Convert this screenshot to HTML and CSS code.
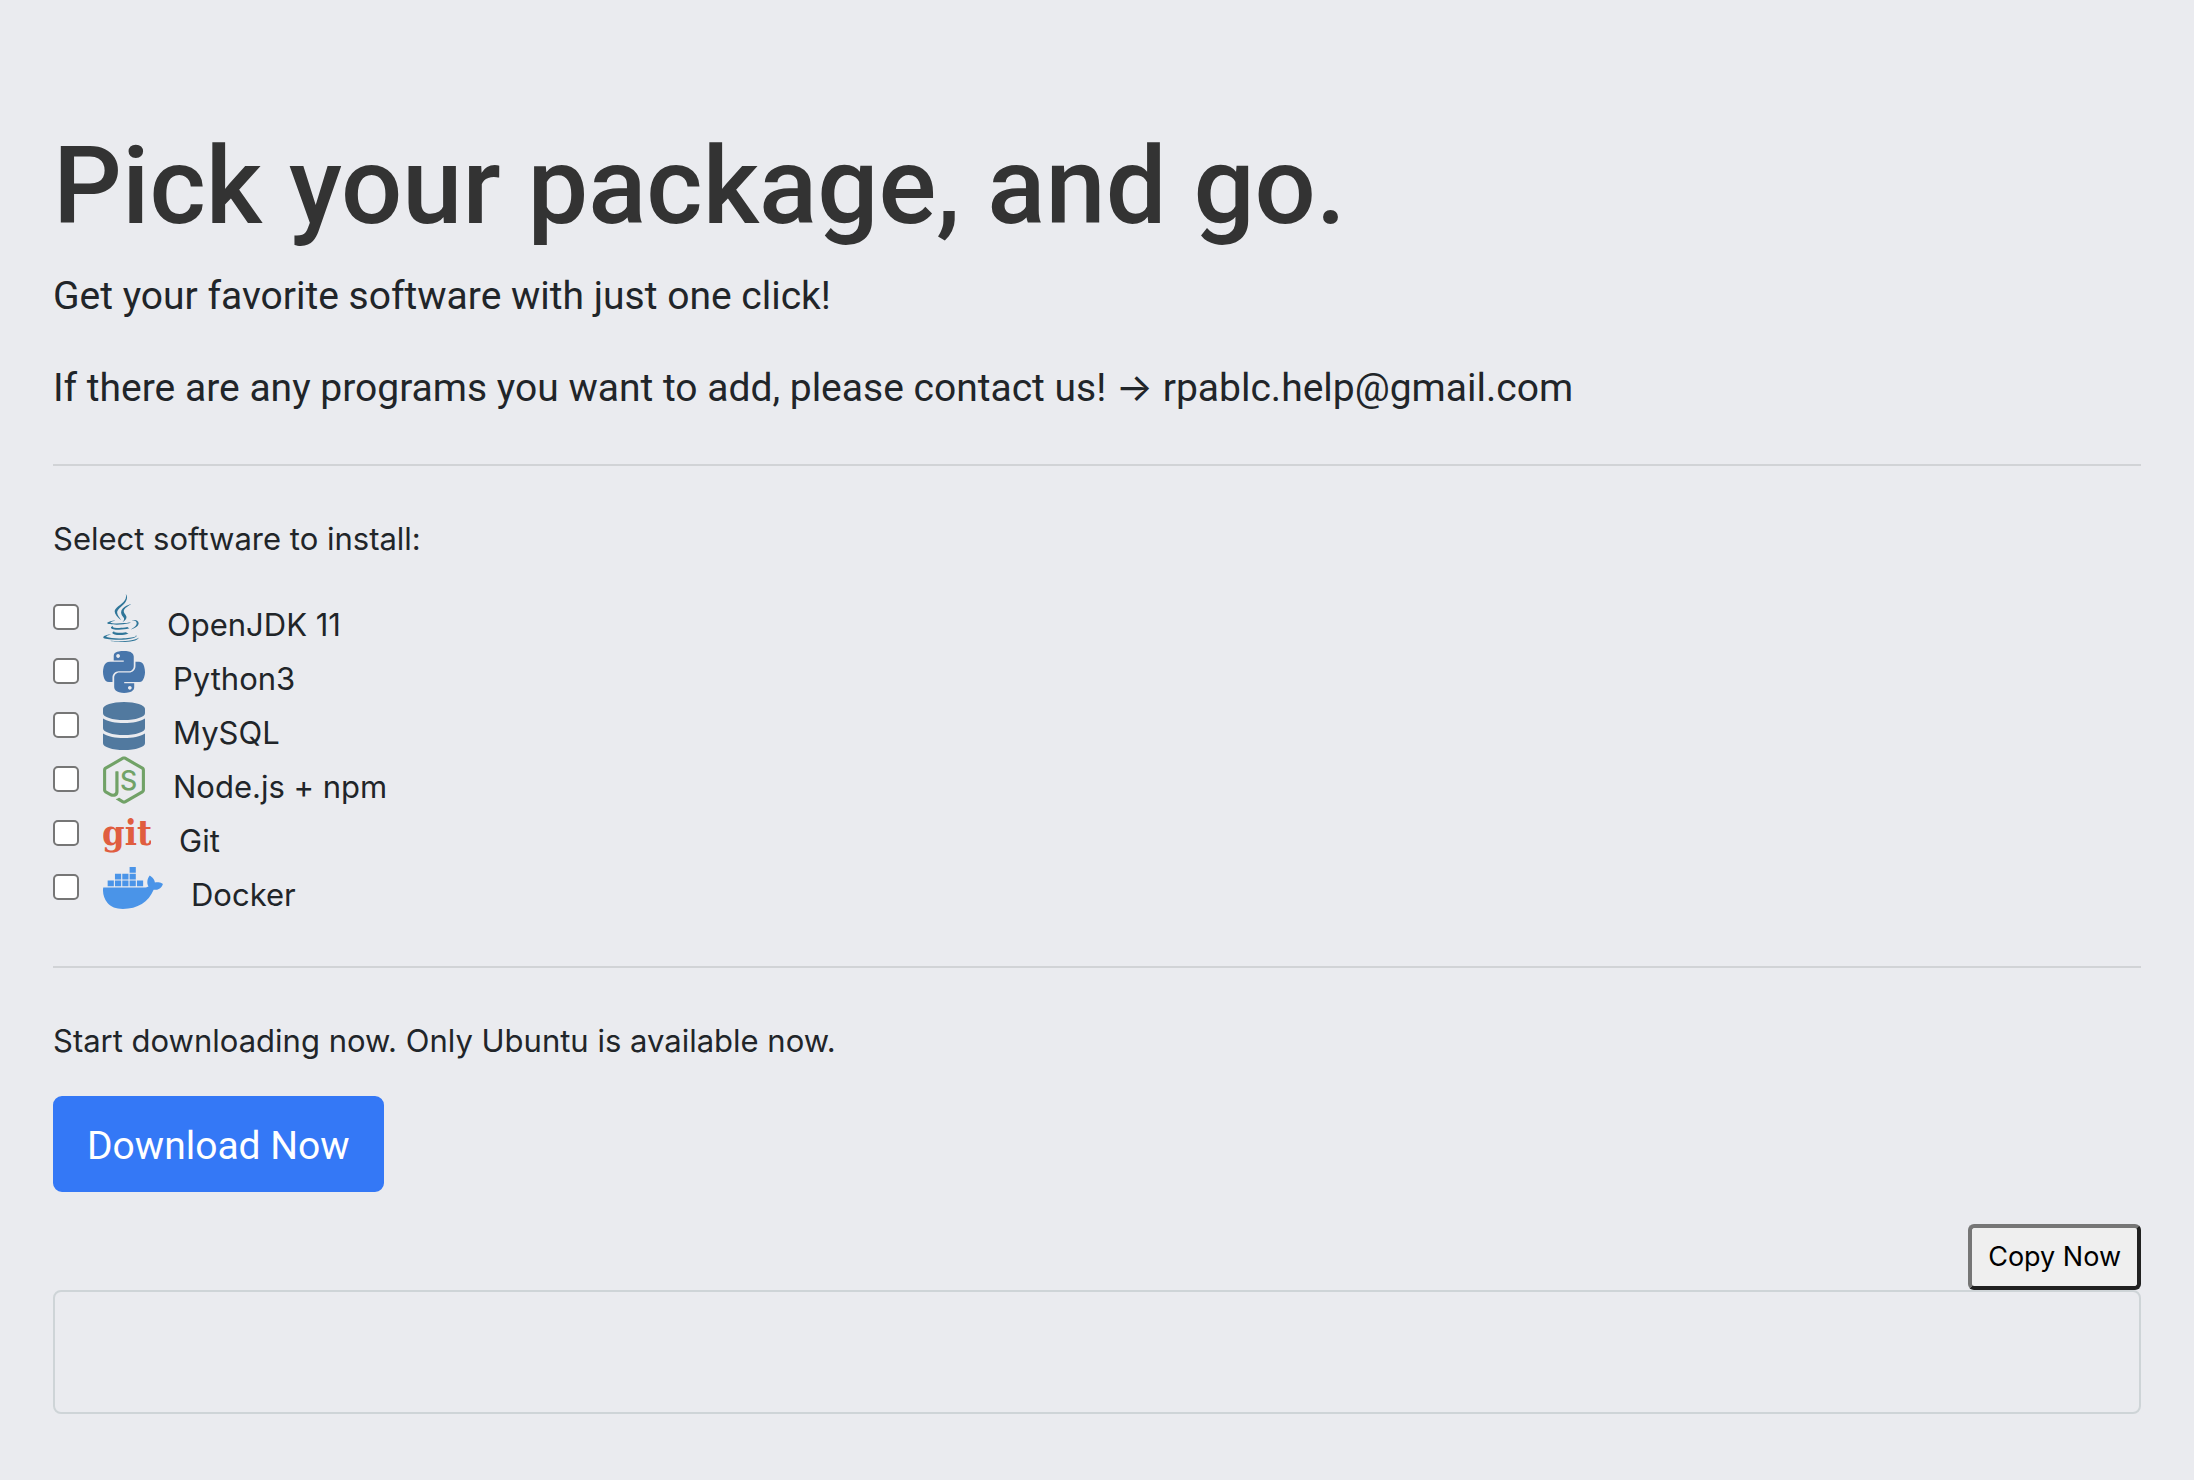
FILE: index.html
```html
<!DOCTYPE html>
<html lang="en">
<head>
    <meta charset="UTF-8">
    <meta name="viewport" content="width=device-width, initial-scale=1.0">
    <title>Pick your package</title>
    <link rel="stylesheet" href="styles.css">
</head>
<body>
    <main class="container">
        <h1 class="title">Pick your package, and go.</h1>
        <p class="lead">Get your favorite software with just one click!</p>
        <p class="lead">If there are any programs you want to add, please contact us! → rpablc.help@gmail.com</p>
        <hr class="divider">
        <form class="package-form">
            <p class="text">Select software to install:</p>
            <div class="package-list">
                <div class="package">
                    <input type="checkbox" id="openjdk" name="package" value="openjdk">
                    <label for="openjdk">
                        <svg class="icon java" viewBox="0 0 384 512" width="36" height="48" aria-hidden="true"><path d="M277.74 312.9c9.8-6.7 23.4-12.5 23.4-12.5s-38.7 7-77.2 10.2c-47.1 3.9-97.7 4.7-123.1 1.3-60.1-8 33-30.1 33-30.1s-36.1-2.4-80.6 19c-52.5 25.4 130 37 224.5 12.1zm-85.4-32.1c-19-42.7-83.1-80.2 0-145.8C296 53.2 242.84 0 242.84 0c21.5 84.5-75.6 110.1-110.7 162.6-23.9 35.9 11.7 74.4 60.2 118.2zm114.6-176.2c.1 0-175.2 43.8-91.5 140.2 24.7 28.4-6.5 54-6.5 54s62.7-32.4 33.9-72.9c-26.9-37.8-47.5-56.6 64.1-121.3zm-6.1 270.5a12.19 12.19 0 0 1-2 2.6c128.3-33.7 81.1-118.9 19.8-97.3a17.33 17.33 0 0 0-8.2 6.3 70.45 70.45 0 0 1 11-3c31-6.5 75.5 41.5-20.6 91.4zM348 437.4s14.5 11.9-15.9 21.2c-57.9 17.5-240.8 22.8-291.6.7-18.3-7.9 16-19 26.8-21.3 11.2-2.4 17.7-2 17.7-2-20.3-14.3-131.3 28.1-56.4 40.2C232.84 509.4 401 461.3 348 437.4zM124.44 396c-78.7 22 47.9 67.4 148.1 24.5a185.89 185.89 0 0 1-28.2-13.8c-44.7 8.5-65.4 9.1-106 4.5-33.5-3.8-13.9-15.2-13.9-15.2zm179.8 97.2c-78.7 14.8-175.8 13.1-233.3 3.6 0-.1 11.8 9.7 72.4 13.6 92.2 5.9 233.8-3.3 237.1-46.9 0 0-6.4 16.5-76.2 29.7zM260.64 353c-59.2 11.4-93.5 11.1-136.8 6.6-33.5-3.5-11.6-19.7-11.6-19.7-86.8 28.8 48.2 61.4 169.5 25.9a60.37 60.37 0 0 1-21.1-12.8z"/></svg>
                        <span>OpenJDK 11</span>
                    </label>
                </div>
                <div class="package">
                    <input type="checkbox" id="python" name="package" value="python">
                    <label for="python">
                        <svg class="icon python" viewBox="0 0 448 512" width="42" height="48" aria-hidden="true"><path d="M439.8 200.5c-7.7-30.9-22.3-54.2-53.4-54.2h-40.1v47.4c0 36.8-31.2 67.8-66.8 67.8H172.7c-29.2 0-53.4 25-53.4 54.3v101.8c0 29 25.2 46 53.4 54.3 33.8 9.9 66.3 11.7 106.8 0 26.9-7.8 53.4-23.5 53.4-54.3v-40.7H226.2v-13.6h160.2c31.1 0 42.6-21.7 53.4-54.2 11.2-33.5 10.7-65.7 0-108.6zM286.2 404c11.1 0 20.1 9.1 20.1 20.3 0 11.3-9 20.4-20.1 20.4-11 0-20.1-9.2-20.1-20.4.1-11.3 9.1-20.3 20.1-20.3zM167.8 248.1h106.8c29.7 0 53.4-24.5 53.4-54.3V91.9c0-29-24.4-50.7-53.4-55.6-35.8-5.9-74.7-5.6-106.8.1-45.2 8-53.4 24.7-53.4 55.6v40.7h106.9v13.6h-147c-31.1 0-58.3 18.7-66.8 54.2-9.8 40.7-10.2 66.1 0 108.6 7.6 31.6 25.7 54.2 56.8 54.2H101v-48.8c0-35.3 30.5-66.4 66.8-66.4zm-6.7-142.6c-11.1 0-20.1-9.1-20.1-20.3.1-11.3 9-20.4 20.1-20.4 11 0 20.1 9.2 20.1 20.4s-9 20.3-20.1 20.3z"/></svg>
                        <span>Python3</span>
                    </label>
                </div>
                <div class="package">
                    <input type="checkbox" id="mysql" name="package" value="mysql">
                    <label for="mysql">
                        <svg class="icon mysql" viewBox="0 0 448 512" width="42" height="48" aria-hidden="true"><path d="M448 73.143v45.714C448 159.143 347.667 192 224 192S0 159.143 0 118.857V73.143C0 32.857 100.333 0 224 0s224 32.857 224 73.143zM448 176v102.857C448 319.143 347.667 352 224 352S0 319.143 0 278.857V176c48.125 33.143 136.208 48.572 224 48.572S399.874 209.143 448 176zm0 160v102.857C448 479.143 347.667 512 224 512S0 479.143 0 438.857V336c48.125 33.143 136.208 48.572 224 48.572S399.874 369.143 448 336z"/></svg>
                        <span>MySQL</span>
                    </label>
                </div>
                <div class="package">
                    <input type="checkbox" id="node" name="package" value="node">
                    <label for="node">
                        <svg class="icon node" viewBox="0 0 448 512" width="42" height="48" aria-hidden="true"><path d="M224 508c-6.7 0-13.5-1.8-19.4-5.2l-61.7-36.5c-9.2-5.2-4.7-7-1.7-8 12.3-4.3 14.8-5.2 27.9-12.7 1.4-.8 3.2-.5 4.6.4l47.4 28.1c1.7 1 4.1 1 5.7 0l184.7-106.6c1.7-1 2.8-3 2.8-5V149.3c0-2.1-1.1-4-2.9-5.1L226.8 37.7c-1.7-1-4-1-5.7 0L36.6 144.3c-1.8 1-2.9 3-2.9 5.1v213.1c0 2 1.1 4 2.9 4.9l50.6 29.2c27.5 13.7 44.3-2.4 44.3-18.7V167.5c0-3 2.4-5.3 5.4-5.3h23.4c2.9 0 5.4 2.3 5.4 5.3V378c0 36.6-20 57.6-54.7 57.6-10.7 0-19.1 0-42.5-11.6l-48.4-27.9C8.1 389.2.7 376.3.7 362.4V149.3c0-13.8 7.4-26.8 19.4-33.7L204.6 9c11.7-6.6 27.2-6.6 38.8 0l184.7 106.7c12 6.9 19.4 19.8 19.4 33.7v213.1c0 13.8-7.4 26.7-19.4 33.7L243.4 502.8c-5.9 3.4-12.6 5.2-19.4 5.2z"/><text class="node-text" x="182" y="360">S</text></svg>
                        <span>Node.js + npm</span>
                    </label>
                </div>
                <div class="package">
                    <input type="checkbox" id="git" name="package" value="git">
                    <label for="git">
                        <svg class="icon git" viewBox="0 0 48 48" width="48" height="48" aria-hidden="true"><text class="git-text" x="-1" y="35">git</text></svg>
                        <span>Git</span>
                    </label>
                </div>
                <div class="package">
                    <input type="checkbox" id="docker" name="package" value="docker">
                    <label for="docker">
                        <svg class="icon docker" viewBox="0 0 640 512" width="60" height="48" aria-hidden="true"><path d="M349.9 236.3h-66.1v-59.4h66.1v59.4zm0-204.3h-66.1v60.7h66.1V32zm78.2 144.8H362v59.4h66.1v-59.4zm-156.3-72.1h-66.1v60.1h66.1v-60.1zm78.1 0h-66.1v60.1h66.1v-60.1zm276.8 100c-14.4-9.7-47.6-13.2-73.1-8.4-3.3-24-16.7-44.9-41.1-63.7l-14-9.3-9.3 14c-18.4 27.8-23.4 73.6-3.7 103.8-8.7 4.7-25.8 11.1-48.4 10.7H2.4c-8.7 50.8 5.8 116.8 44 162.1 37.1 43.9 92.7 66.2 165.4 66.2 157.4 0 273.9-72.5 328.4-204.2 21.4.4 67.6.1 91.3-45.2 1.5-2.5 6.6-13.2 8.5-17.1l-13.3-8.9zm-511.1-27.9h-66v59.4h66.1v-59.4zm78.1 0h-66.1v59.4h66.1v-59.4zm78.1 0h-66.1v59.4h66.1v-59.4zm-78.1-72.1h-66.1v60.1h66.1v-60.1z"/></svg>
                        <span>Docker</span>
                    </label>
                </div>
            </div>
            <hr class="divider">
            <p class="text">Start downloading now. Only Ubuntu is available now.</p>
            <button type="button" class="download-btn">Download Now</button>
        </form>
        <div class="copy-row">
            <button type="button" class="copy-btn">Copy Now</button>
        </div>
        <div class="output"></div>
    </main>
</body>
</html>
```

FILE: styles.css
```css
* {
    box-sizing: border-box;
}
body {
    font-family: Inter, "Liberation Sans", sans-serif;
    font-size: 31px;
    line-height: 50px;
    color: #212529;
    background-color: #eaebef;
    margin: 0;
}
.container {
    padding: 122px 53px 64px;
}
.title {
    margin: 0 0 16px;
    font-family: Roboto, Inter, sans-serif;
    font-size: 108px;
    font-weight: 500;
    line-height: 128px;
    color: #333;
}
.lead {
    margin: 0 0 32px;
    font-family: Roboto, Inter, sans-serif;
    font-size: 39px;
    font-weight: 400;
    line-height: 60px;
}
.divider {
    margin: 46px 0 48px;
    border: 0;
    border-top: 2px solid #d1d3d6;
}
.text {
    margin: 0 0 30px;
}
.package-list {
    margin-bottom: 48px;
}
.package {
    display: flex;
    height: 54px;
}
.package input {
    appearance: none;
    width: 26px;
    height: 26px;
    margin: 10px 24px 0 0;
    border: 2px solid #767676;
    border-radius: 5px;
    background-color: #fff;
}
.package input:checked {
    background-color: #3478f6;
}
.package label {
    display: flex;
    gap: 28px;
}
.package span {
    padding-top: 6px;
}
.icon {
    fill: currentColor;
}
.java {
    color: #307699;
}
.python {
    color: #4876ab;
}
.mysql {
    color: #51799f;
}
.node {
    color: #71a267;
}
.node-text {
    font-size: 284px;
    font-weight: 500;
}
.git {
    color: #e05d3f;
}
.git-text {
    font-family: "DejaVu Serif Condensed", "DejaVu Serif", serif;
    font-size: 36px;
    font-weight: bold;
}
.docker {
    color: #4a94e8;
}
.download-btn {
    display: block;
    padding: 18px 32px 14px;
    border: 2px solid #3478f6;
    border-radius: 9px;
    font-family: Roboto, Inter, sans-serif;
    font-size: 39px;
    line-height: 60px;
    color: #fff;
    background-color: #3478f6;
    cursor: pointer;
}
.copy-row {
    display: flex;
    justify-content: flex-end;
    margin-top: 32px;
}
.copy-btn {
    padding: 12px 16px;
    border: 4px solid;
    border-color: #767676 #212121 #212121 #767676;
    border-radius: 6px;
    font-family: inherit;
    font-size: 27px;
    line-height: 34px;
    color: #000;
    background-color: #efefef;
    cursor: pointer;
}
.output {
    height: 124px;
    border: 2px solid #ced4d7;
    border-radius: 8px;
}
```
